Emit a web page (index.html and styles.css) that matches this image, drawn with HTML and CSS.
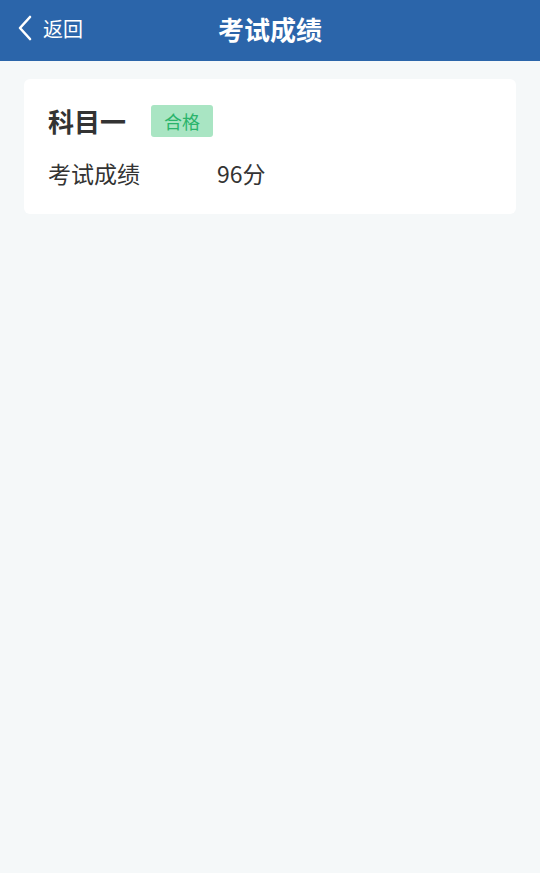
FILE: index.html
```html
<!DOCTYPE html>
<html lang="zh-CN">
<head>
    <meta charset="UTF-8">
    <meta name="viewport" content="width=device-width, initial-scale=1.0">
    <title>考试成绩</title>
    <link rel="stylesheet" href="styles.css">
</head>
<body>
    <header class="navbar">
        <a class="back" href="#">
            <svg class="back-icon" width="16" height="26" viewBox="0 0 16 26">
                <path d="M13 2 L3 13 L13 24" fill="none" stroke="#fff" stroke-width="2.6" stroke-linecap="round" stroke-linejoin="round"/>
            </svg>
            <span>返回</span>
        </a>
        <h1 class="title">考试成绩</h1>
    </header>

    <main class="content">
        <div class="card">
            <div class="card-head">
                <span class="subject">科目一</span>
                <span class="badge">合格</span>
            </div>
            <div class="row">
                <span class="label">考试成绩</span>
                <span class="value">96分</span>
            </div>
        </div>
    </main>
</body>
</html>
```

FILE: styles.css
```css
body {
    margin: 0;
    font-family: "Noto Sans CJK SC", "Noto Sans", sans-serif;
    background: #f5f8f9;
    color: #333;
    min-height: 873px;
}

.navbar {
    position: relative;
    height: 61px;
    background: #2b65aa;
    display: flex;
    align-items: center;
    justify-content: center;
}

.back {
    position: absolute;
    left: 17px;
    top: 0;
    height: 56px;
    display: flex;
    align-items: center;
    gap: 10px;
    color: #fff;
    text-decoration: none;
    font-size: 20px;
}

.back-icon {
    display: block;
}

.title {
    margin: 0 0 5px;
    color: #fff;
    font-size: 26px;
    font-weight: bold;
}

.content {
    padding: 18px 24px;
}

.card {
    background: #fff;
    border-radius: 6px;
    padding: 24px 24px 26px;
}

.card-head {
    display: flex;
    align-items: center;
    gap: 25px;
}

.subject {
    font-size: 26px;
    font-weight: bold;
    color: #333;
    line-height: 36px;
}

.badge {
    background: #a9e5c3;
    color: #2ab46b;
    font-size: 18px;
    line-height: 32px;
    height: 32px;
    padding: 0 13px;
    border-radius: 3px;
}

.row {
    display: flex;
    align-items: center;
    margin-top: 19px;
    font-size: 23px;
    line-height: 30px;
    color: #333;
}

.label {
    width: 169px;
}
```
